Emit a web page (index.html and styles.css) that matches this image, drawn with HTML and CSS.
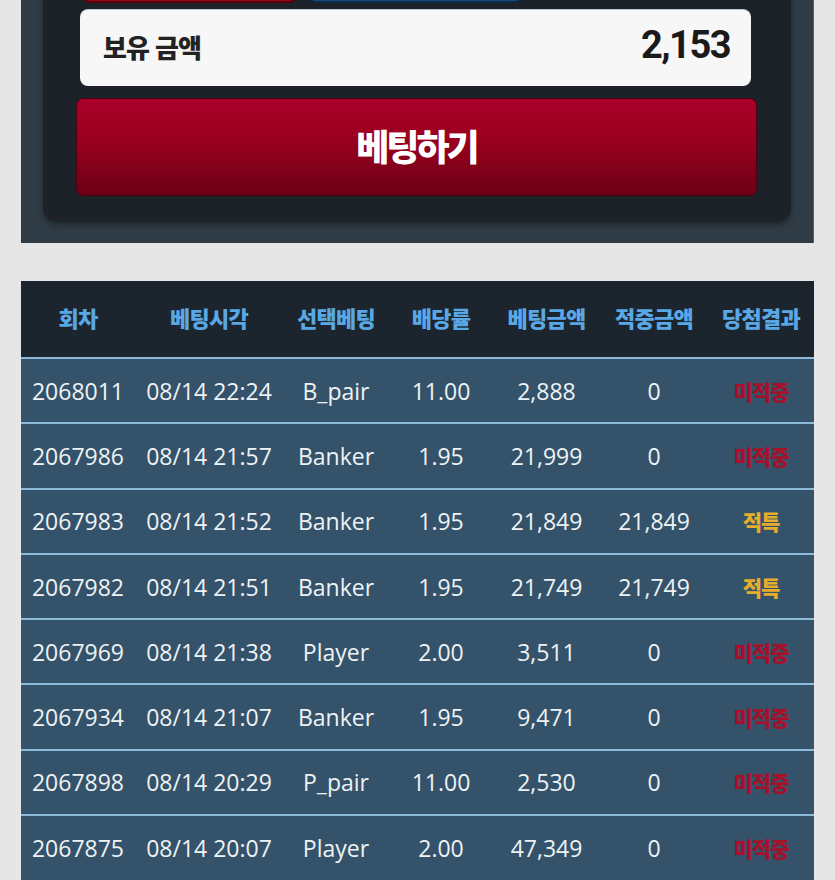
FILE: index.html
```html
<!DOCTYPE html>
<html lang="ko">
<head>
<meta charset="utf-8">
<link rel="stylesheet" href="styles.css">
</head>
<body>
<div class="page">
  <section class="panel">
    <div class="panel-inner">
      <div class="choice-row">
        <div class="choice choice-red"></div>
        <div class="choice choice-blue"></div>
      </div>
      <div class="balance">
        <span class="balance-label">보유 금액</span>
        <span class="balance-value">2,153</span>
      </div>
      <button class="bet-btn">베팅하기</button>
    </div>
  </section>

  <table class="history">
    <colgroup>
      <col class="c1"><col class="c2"><col class="c3"><col class="c4"><col class="c5"><col class="c6"><col class="c7">
    </colgroup>
    <thead>
      <tr>
        <th>회차</th><th>베팅시각</th><th>선택베팅</th><th>배당률</th><th>베팅금액</th><th>적중금액</th><th>당첨결과</th>
      </tr>
    </thead>
    <tbody>
      <tr><td>2068011</td><td>08/14 22:24</td><td>B_pair</td><td>11.00</td><td>2,888</td><td>0</td><td class="lose">미적중</td></tr>
      <tr><td>2067986</td><td>08/14 21:57</td><td>Banker</td><td>1.95</td><td>21,999</td><td>0</td><td class="lose">미적중</td></tr>
      <tr><td>2067983</td><td>08/14 21:52</td><td>Banker</td><td>1.95</td><td>21,849</td><td>21,849</td><td class="win">적특</td></tr>
      <tr><td>2067982</td><td>08/14 21:51</td><td>Banker</td><td>1.95</td><td>21,749</td><td>21,749</td><td class="win">적특</td></tr>
      <tr><td>2067969</td><td>08/14 21:38</td><td>Player</td><td>2.00</td><td>3,511</td><td>0</td><td class="lose">미적중</td></tr>
      <tr><td>2067934</td><td>08/14 21:07</td><td>Banker</td><td>1.95</td><td>9,471</td><td>0</td><td class="lose">미적중</td></tr>
      <tr><td>2067898</td><td>08/14 20:29</td><td>P_pair</td><td>11.00</td><td>2,530</td><td>0</td><td class="lose">미적중</td></tr>
      <tr><td>2067875</td><td>08/14 20:07</td><td>Player</td><td>2.00</td><td>47,349</td><td>0</td><td class="lose">미적중</td></tr>
    </tbody>
  </table>
</div>
</body>
</html>
```

FILE: styles.css
```css
html, body {
  margin: 0;
  padding: 0;
  background: #e6e6e6;
  overflow: hidden;
}

.page {
  margin-top: -60px;
  padding-left: 21px;
  width: 793px;
}

.panel {
  background: #2f3c46;
  padding: 0 22px 21px 22px;
  border-right: 1px solid #56636c;
  box-sizing: border-box;
  width: 793px;
}

.panel-inner {
  background: #1c2227;
  border-radius: 0 0 14px 14px;
  padding: 0 34px 26px 33px;
  box-shadow: 0 3px 6px rgba(0, 0, 0, 0.35);
}

.choice-row {
  display: flex;
  height: 63px;
  gap: 11px;
  padding-left: 6px;
}

.choice {
  width: 215px;
  height: 63px;
  box-sizing: border-box;
  border-radius: 0 0 8px 8px;
}

.choice-red {
  background: #8a0a14;
  border: 2px solid #5a0008;
}

.choice-blue {
  background: #1c4a78;
  border: 2px solid #0d2a48;
}

.balance {
  margin: 6px 6px 0 4px;
  height: 77px;
  background: #f7f7f7;
  border-radius: 8px;
  border-top: 1px solid #b8c6d8;
  box-sizing: border-box;
  display: flex;
  align-items: center;
  justify-content: space-between;
  padding: 0 21px 0 23px;
}

.balance-label {
  font-family: "Noto Sans CJK KR", sans-serif;
  font-weight: 900;
  font-size: 26px;
  letter-spacing: -1px;
  color: #222;
  margin-top: -4px;
}

.balance-value {
  font-family: Roboto, "Liberation Sans", sans-serif;
  font-weight: 700;
  font-size: 38px;
  letter-spacing: -1.5px;
  color: #1a1a1a;
  margin-top: -6px;
}

.bet-btn {
  display: block;
  width: 100%;
  margin-top: 12px;
  height: 98px;
  border: 1px solid #4a0010;
  border-radius: 7px;
  background: linear-gradient(#ab0029 0%, #98001f 45%, #6c0016 100%);
  color: #ffffff;
  font-family: "Noto Sans CJK KR", sans-serif;
  font-weight: 900;
  font-size: 36px;
  letter-spacing: -3px;
  padding: 0 0 4px 0;
}

.history {
  margin-top: 38px;
  width: 793px;
  border-collapse: collapse;
  table-layout: fixed;
}

.c1 { width: 114px; }
.c2 { width: 148px; }
.c3 { width: 106px; }
.c4 { width: 104px; }
.c5 { width: 107px; }
.c6 { width: 108px; }
.c7 { width: 106px; }

.history thead tr {
  background: #1c252d;
  height: 77px;
}

.history th {
  font-family: "Noto Sans CJK KR", sans-serif;
  font-weight: 900;
  font-size: 22px;
  letter-spacing: -0.8px;
  color: #5aa7e6;
  text-align: center;
  padding: 0 0 4px 0;
  white-space: nowrap;
}

.history tbody tr {
  background: #34526a;
  height: 65.3px;
  border-top: 2px solid #8dbad9;
}

.history td {
  font-family: "Open Sans", "Noto Sans", sans-serif;
  font-size: 23px;
  color: #eef2f4;
  text-align: center;
  padding: 0;
  white-space: nowrap;
}

.history td.lose {
  font-family: "Noto Sans CJK KR", sans-serif;
  font-weight: 900;
  font-size: 21px;
  color: #a3122a;
  letter-spacing: -1px;
}

.history td.win {
  font-family: "Noto Sans CJK KR", sans-serif;
  font-weight: 900;
  font-size: 21px;
  color: #e6ac2e;
  letter-spacing: -1px;
}
```
